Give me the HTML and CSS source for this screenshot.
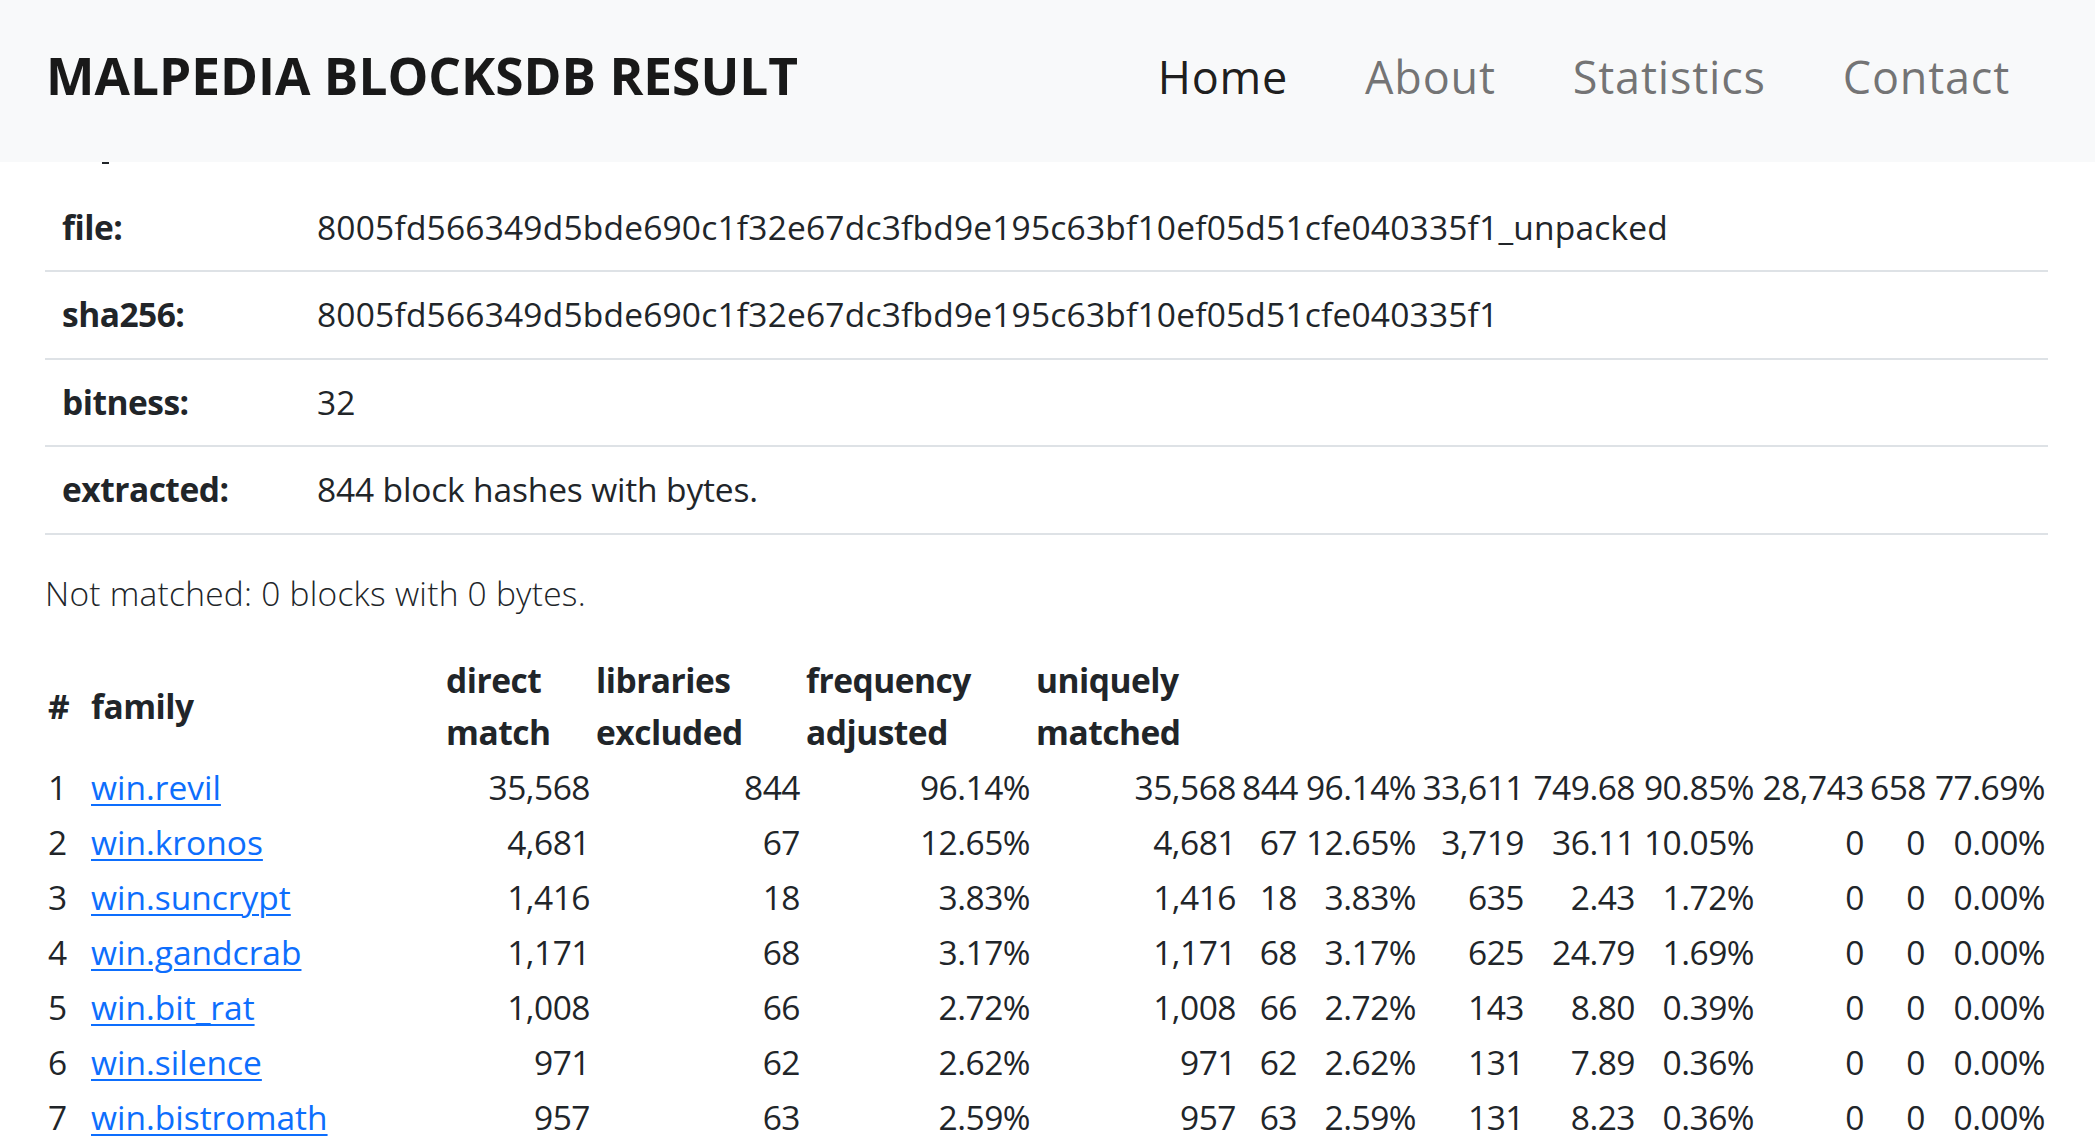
FILE: index.html
```html
<!DOCTYPE html>
<html lang="en">
<head>
<meta charset="utf-8">
<title>Malpedia BlocksDB Result</title>
<link rel="stylesheet" href="styles.css">
</head>
<body>
<header class="navbar">
  <a class="brand" href="#">MALPEDIA BLOCKSDB RESULT</a>
  <nav class="nav">
    <a class="nav-link active" href="#">Home</a>
    <a class="nav-link" href="#">About</a>
    <a class="nav-link" href="#">Statistics</a>
    <a class="nav-link" href="#">Contact</a>
  </nav>
</header>
<main class="container">
  <div class="peek"></div>
  <table class="info">
    <colgroup><col class="info-key"><col></colgroup>
    <tbody>
      <tr><th>file:</th><td class="hash">8005fd566349d5bde690c1f32e67dc3fbd9e195c63bf10ef05d51cfe040335f1_unpacked</td></tr>
      <tr><th>sha256:</th><td class="hash">8005fd566349d5bde690c1f32e67dc3fbd9e195c63bf10ef05d51cfe040335f1</td></tr>
      <tr><th>bitness:</th><td class="hash">32</td></tr>
      <tr><th>extracted:</th><td class="plain">844 block hashes with bytes.</td></tr>
    </tbody>
  </table>
  <p class="note">Not matched: 0 blocks with 0 bytes.</p>
  <table class="results">
    <colgroup>
      <col class="c1"><col class="c2"><col class="c3"><col class="c4"><col class="c5"><col class="c6"><col class="c7">
      <col class="c8"><col class="c9"><col class="c10"><col class="c11"><col class="c12"><col class="c13"><col class="c14">
    </colgroup>
    <thead>
      <tr><th>#</th><th>family</th><th>direct<br>match</th><th>libraries<br>excluded</th><th>frequency<br>adjusted</th><th>uniquely<br>matched</th></tr>
    </thead>
    <tbody>
      <tr><td class="l">1</td><td class="l"><a href="#">win.revil</a></td><td>35,568</td><td>844</td><td>96.14%</td><td>35,568</td><td>844</td><td>96.14%</td><td>33,611</td><td>749.68</td><td>90.85%</td><td>28,743</td><td>658</td><td>77.69%</td></tr>
      <tr><td class="l">2</td><td class="l"><a href="#">win.kronos</a></td><td>4,681</td><td>67</td><td>12.65%</td><td>4,681</td><td>67</td><td>12.65%</td><td>3,719</td><td>36.11</td><td>10.05%</td><td>0</td><td>0</td><td>0.00%</td></tr>
      <tr><td class="l">3</td><td class="l"><a href="#">win.suncrypt</a></td><td>1,416</td><td>18</td><td>3.83%</td><td>1,416</td><td>18</td><td>3.83%</td><td>635</td><td>2.43</td><td>1.72%</td><td>0</td><td>0</td><td>0.00%</td></tr>
      <tr><td class="l">4</td><td class="l"><a href="#">win.gandcrab</a></td><td>1,171</td><td>68</td><td>3.17%</td><td>1,171</td><td>68</td><td>3.17%</td><td>625</td><td>24.79</td><td>1.69%</td><td>0</td><td>0</td><td>0.00%</td></tr>
      <tr><td class="l">5</td><td class="l"><a href="#">win.bit_rat</a></td><td>1,008</td><td>66</td><td>2.72%</td><td>1,008</td><td>66</td><td>2.72%</td><td>143</td><td>8.80</td><td>0.39%</td><td>0</td><td>0</td><td>0.00%</td></tr>
      <tr><td class="l">6</td><td class="l"><a href="#">win.silence</a></td><td>971</td><td>62</td><td>2.62%</td><td>971</td><td>62</td><td>2.62%</td><td>131</td><td>7.89</td><td>0.36%</td><td>0</td><td>0</td><td>0.00%</td></tr>
      <tr><td class="l">7</td><td class="l"><a href="#">win.bistromath</a></td><td>957</td><td>63</td><td>2.59%</td><td>957</td><td>63</td><td>2.59%</td><td>131</td><td>8.23</td><td>0.36%</td><td>0</td><td>0</td><td>0.00%</td></tr>
    </tbody>
  </table>
</main>
</body>
</html>
```
FILE: styles.css
```css
html, body {
  margin: 0;
  padding: 0;
  overflow: hidden;
}
body {
  font-family: "Open Sans", "Noto Sans", "Liberation Sans", sans-serif;
  font-size: 33.5px;
  line-height: 51.4px;
  color: #212529;
  background: #ffffff;
  letter-spacing: -0.5px;
}
.navbar {
  height: 162px;
  background: #f8f9fa;
  display: flex;
  align-items: center;
  justify-content: space-between;
  padding: 0 47px 10px 46px;
  box-sizing: border-box;
}
.brand {
  font-size: 51.4px;
  font-weight: 700;
  color: rgba(0, 0, 0, 0.9);
  text-decoration: none;
  letter-spacing: 0;
  line-height: 1;
}
.nav {
  display: flex;
  align-items: center;
}
.nav-link {
  font-size: 45px;
  line-height: 1;
  padding: 0 38px 0 39px;
  color: rgba(0, 0, 0, 0.55);
  text-decoration: none;
  letter-spacing: 0.8px;
}
.nav-link.active {
  color: rgba(0, 0, 0, 0.9);
}
.container {
  padding: 0 47px 0 45px;
}
.peek {
  width: 7px;
  height: 2px;
  margin-left: 57px;
  background: #212529;
}
.info {
  width: 100%;
  border-collapse: collapse;
  margin-top: 21px;
  margin-bottom: 33.2px;
}
.info-key {
  width: 255px;
}
.info th,
.info td {
  text-align: left;
  padding: 17px 17px;
  border-bottom: 2px solid #dee2e6;
  vertical-align: top;
}
.info th {
  font-weight: 700;
}
.info td.hash {
  letter-spacing: 0.2px;
}
.info td.plain {
  letter-spacing: -0.15px;
}
.note {
  margin: 0 0 34.2px;
  font-weight: 300;
  letter-spacing: 0.25px;
}
.results {
  width: 100%;
  table-layout: fixed;
  border-collapse: collapse;
}
.results th {
  text-align: left;
  font-weight: 700;
  padding: 2px 3px;
  vertical-align: middle;
  white-space: nowrap;
}
.results td {
  padding: 1.8px 3px;
  text-align: right;
  white-space: nowrap;
}
.results td.l {
  text-align: left;
}
.results a {
  color: #0d6efd;
  text-decoration: underline;
  text-decoration-thickness: 2px;
  text-underline-offset: 4px;
  letter-spacing: 0;
}
.c1 { width: 43px; }
.c2 { width: 355px; }
.c3 { width: 150px; }
.c4 { width: 210px; }
.c5 { width: 230px; }
.c6 { width: 206px; }
.c7 { width: 61px; }
.c8 { width: 119px; }
.c9 { width: 108px; }
.c10 { width: 111px; }
.c11 { width: 119px; }
.c12 { width: 110px; }
.c13 { width: 61px; }
.c14 { width: 120px; }
```
